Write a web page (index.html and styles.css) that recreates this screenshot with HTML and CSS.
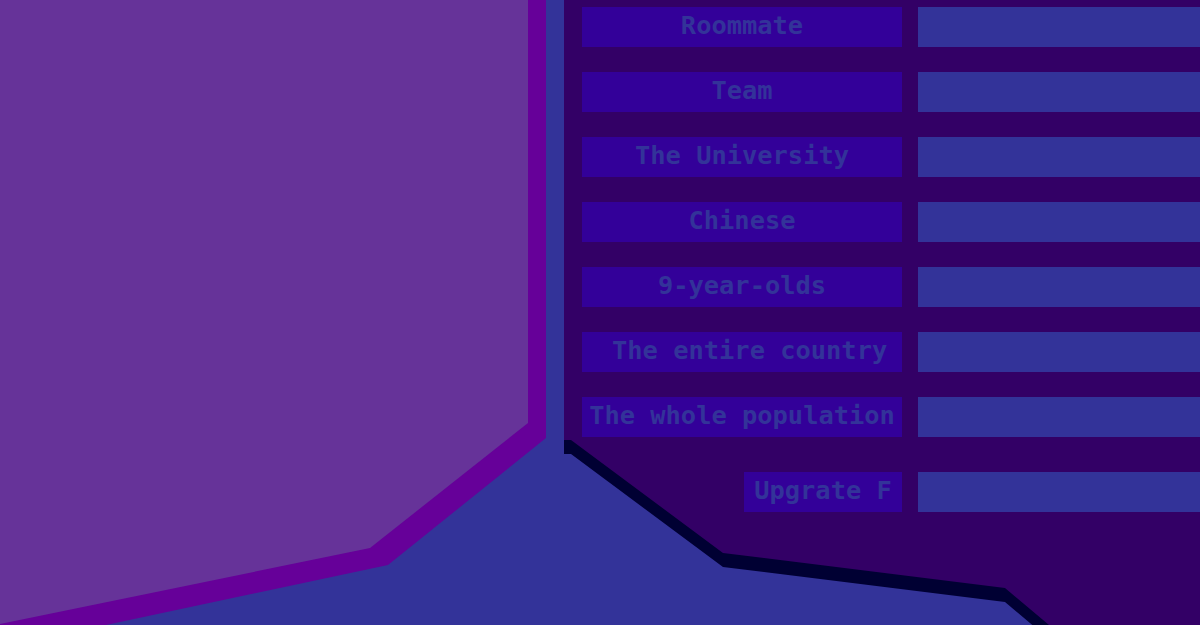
FILE: index.html
```html
<!DOCTYPE html>
<html lang="en">
<head>
<meta charset="utf-8">
<title>Groups</title>
<link rel="stylesheet" href="styles.css">
</head>
<body>
<svg class="backdrop" width="1200" height="625" viewBox="0 0 1200 625" aria-hidden="true">
  <polygon class="left-border" points="0,0 546,0 546,438 388,565 106,625 0,625"/>
  <polygon class="left-fill" points="0,0 528,0 528,423 370,548 0,624"/>
  <polygon class="panel-shadow" points="564,14 1200,14 1200,639 1049,639 1005,602 723,567 571,454 564,454"/>
  <polygon class="panel" points="564,0 1200,0 1200,625 1049,625 1005,588 723,553 571,440 564,440"/>
</svg>
<main class="layout">
  <div class="spacer"></div>
  <ul class="rows">
    <li class="row"><span class="label">Roommate</span><span class="bar"></span></li>
    <li class="row"><span class="label">Team</span><span class="bar"></span></li>
    <li class="row"><span class="label">The University</span><span class="bar"></span></li>
    <li class="row"><span class="label">Chinese</span><span class="bar"></span></li>
    <li class="row"><span class="label">9-year-olds</span><span class="bar"></span></li>
    <li class="row"><span class="label">&nbsp;The entire country</span><span class="bar"></span></li>
    <li class="row"><span class="label">The whole population</span><span class="bar"></span></li>
    <li class="row row-action"><span class="label label-small">Upgrate F</span><span class="bar"></span></li>
  </ul>
</main>
</body>
</html>
```
FILE: styles.css
```css
html, body {
  margin: 0;
  padding: 0;
}

body {
  width: 1200px;
  height: 625px;
  overflow: hidden;
  background: #333399;
  position: relative;
  font-family: "DejaVu Sans Mono", "Liberation Mono", monospace;
}

.backdrop {
  position: absolute;
  left: 0;
  top: 0;
  display: block;
}

.left-border { fill: #660099; }
.left-fill { fill: #663399; }
.panel-shadow { fill: #000033; }
.panel { fill: #330066; }

.layout {
  position: relative;
  display: flex;
  padding-top: 7px;
}

.spacer {
  width: 582px;
  flex: none;
}

.rows {
  list-style: none;
  margin: 0;
  padding: 0;
  flex: 1;
  display: flex;
  flex-direction: column;
  gap: 25px;
}

.row {
  display: flex;
  justify-content: flex-end;
  gap: 16px;
  height: 40px;
}

.row-action {
  margin-top: 10px;
}

.label {
  width: 320px;
  flex: none;
  height: 40px;
  line-height: 37px;
  background: #330099;
  color: #333399;
  font-size: 25.4px;
  font-weight: bold;
  text-align: center;
  white-space: pre;
  overflow: visible;
}

.label-small {
  width: 158px;
}

.bar {
  width: 282px;
  flex: none;
  background: #333399;
}
```
